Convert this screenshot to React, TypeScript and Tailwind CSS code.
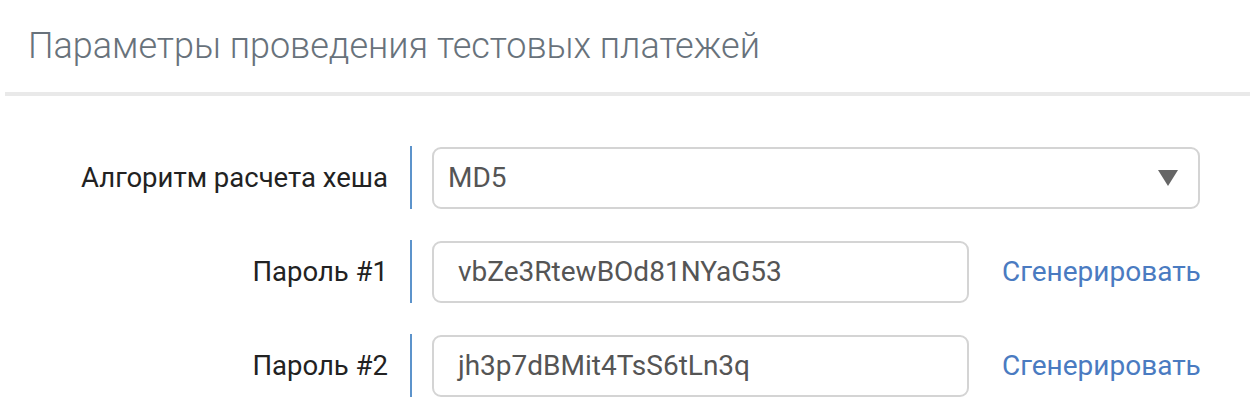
import React from "react";

function Row({ label, children, extra }: { label: string; children: React.ReactNode; extra?: React.ReactNode }) {
  return (
    <div className="flex items-stretch h-[63px]">
      <div className="w-[388px] flex items-center justify-end text-[27.5px] text-[#222]">{label}</div>
      <div className="ml-[22px] w-[2px] bg-[#5c93cb]" />
      <div className="ml-[20px] flex items-center flex-1">
        {children}
        {extra}
      </div>
    </div>
  );
}

export default function App() {
  return (
    <div className="w-[1250px] h-[418px] bg-white overflow-hidden" style={{ fontFamily: "Roboto, 'Noto Sans', sans-serif" }}>
      <div className="h-[92px] pl-[28px] flex items-center">
        <h1 className="text-[36px] font-light text-[#68727b] leading-none">Параметры проведения тестовых платежей</h1>
      </div>
      <div className="ml-[5px] h-[4px] bg-[#e9e9e9]" />
      <div className="pt-[50px] flex flex-col gap-[31px]">
        <Row label="Алгоритм расчета хеша">
          <div className="w-[768px] h-[62px] border-2 border-[#d4d4d4] rounded-[9px] flex items-center justify-between pl-[14px] pr-[20px] text-[28px] text-[#555]">
            <span>MD5</span>
            <svg width="20" height="16" viewBox="0 0 20 16"><path d="M0 0H20L10 16Z" fill="#666" /></svg>
          </div>
        </Row>
        <Row
          label="Пароль #1"
          extra={<a className="ml-[33px] text-[28px] text-[#4a7bc1]">Сгенерировать</a>}
        >
          <div className="w-[537px] h-[62px] border-2 border-[#d4d4d4] rounded-[9px] flex items-center pl-[24px] text-[28px] text-[#555]">vbZe3RtewBOd81NYaG53</div>
        </Row>
        <Row
          label="Пароль #2"
          extra={<a className="ml-[33px] text-[28px] text-[#4a7bc1]">Сгенерировать</a>}
        >
          <div className="w-[537px] h-[62px] border-2 border-[#d4d4d4] rounded-[9px] flex items-center pl-[24px] text-[28px] text-[#555]">jh3p7dBMit4TsS6tLn3q</div>
        </Row>
      </div>
    </div>
  );
}
